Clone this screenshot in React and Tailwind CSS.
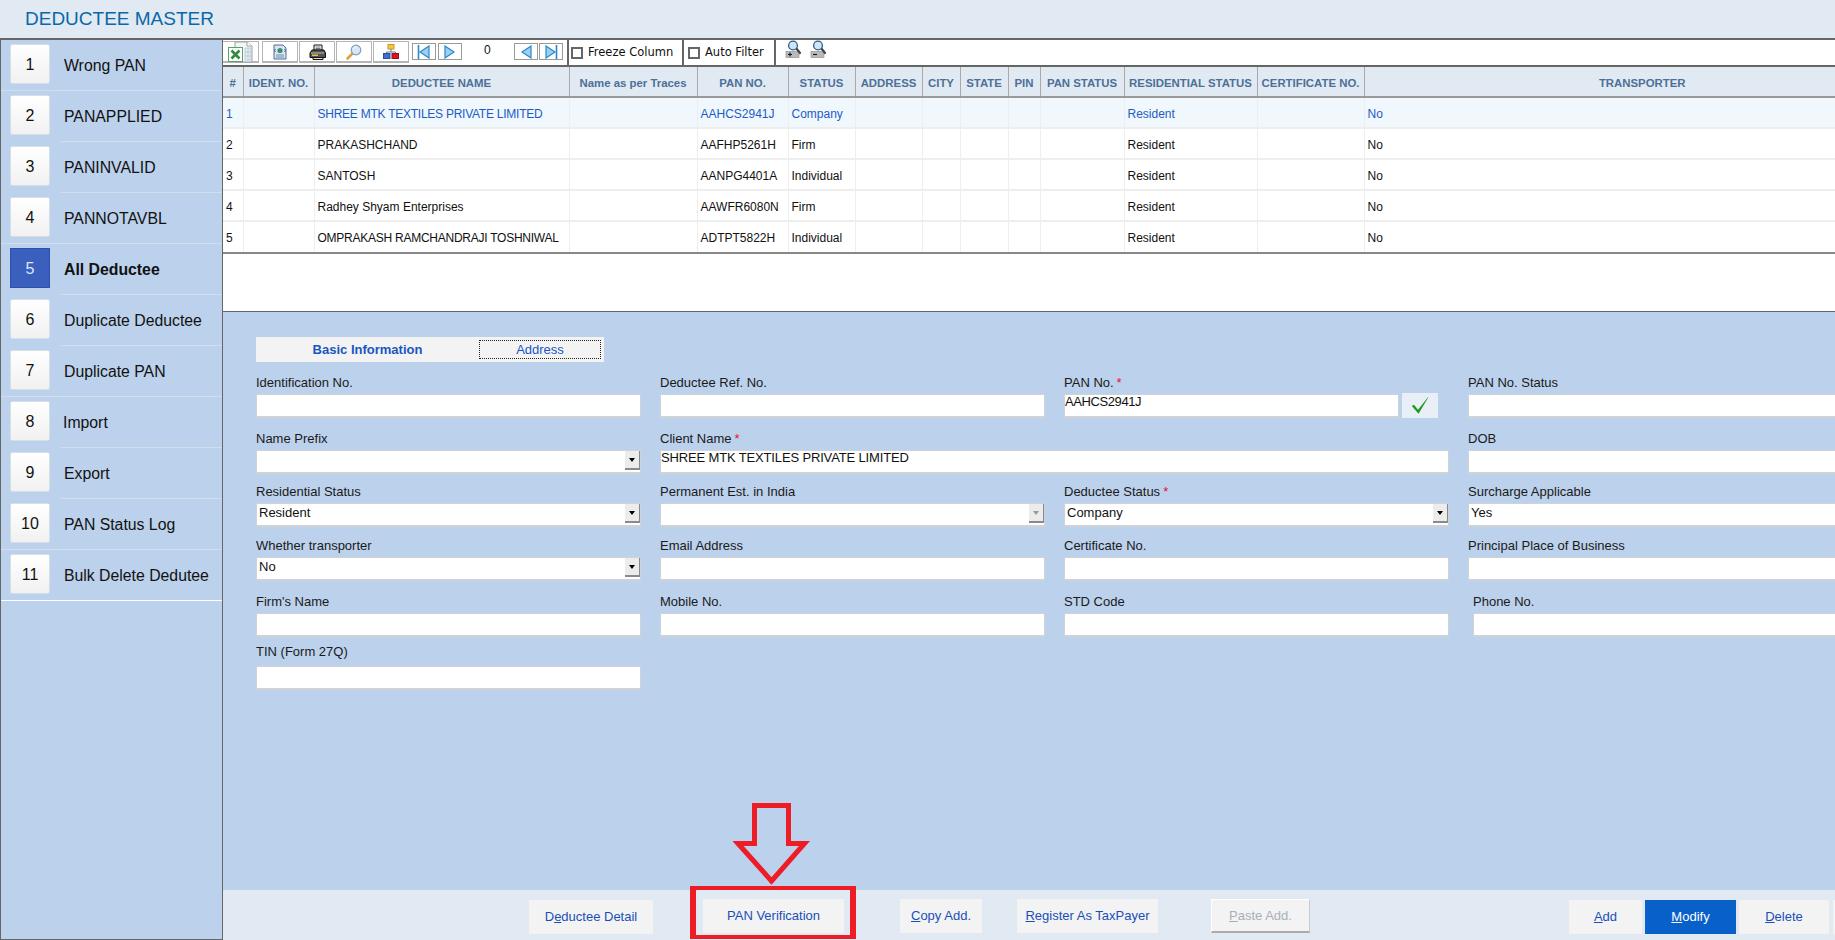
import React from "react";

const menu = [
  { n: 1, label: "Wrong PAN", full: true },
  { n: 2, label: "PANAPPLIED" },
  { n: 3, label: "PANINVALID" },
  { n: 4, label: "PANNOTAVBL", full: true },
  { n: 5, label: "All Deductee", active: true },
  { n: 6, label: "Duplicate Deductee" },
  { n: 7, label: "Duplicate PAN", full: true },
  { n: 8, label: "Import" },
  { n: 9, label: "Export" },
  { n: 10, label: "PAN Status Log", full: true },
  { n: 11, label: "Bulk Delete Dedutee", last: true },
];

const columns = [
  { title: "#", w: "w-[20px]" },
  { title: "IDENT. NO.", w: "w-[71px]" },
  { title: "DEDUCTEE NAME", w: "w-[255px]" },
  { title: "Name as per Traces", w: "w-[128px]" },
  { title: "PAN NO.", w: "w-[91px]" },
  { title: "STATUS", w: "w-[67px]" },
  { title: "ADDRESS", w: "w-[67px]" },
  { title: "CITY", w: "w-[38px]" },
  { title: "STATE", w: "w-[48px]" },
  { title: "PIN", w: "w-[32px]" },
  { title: "PAN STATUS", w: "w-[84px]" },
  { title: "RESIDENTIAL STATUS", w: "w-[133px]" },
  { title: "CERTIFICATE NO.", w: "w-[107px]" },
  { title: "TRANSPORTER", w: "" },
];

const rows = [
  ["1", "", "SHREE MTK TEXTILES PRIVATE LIMITED", "", "AAHCS2941J", "Company", "", "", "", "", "", "Resident", "", "No"],
  ["2", "", "PRAKASHCHAND", "", "AAFHP5261H", "Firm", "", "", "", "", "", "Resident", "", "No"],
  ["3", "", "SANTOSH", "", "AANPG4401A", "Individual", "", "", "", "", "", "Resident", "", "No"],
  ["4", "", "Radhey Shyam Enterprises", "", "AAWFR6080N", "Firm", "", "", "", "", "", "Resident", "", "No"],
  ["5", "", "OMPRAKASH RAMCHANDRAJI TOSHNIWAL", "", "ADTPT5822H", "Individual", "", "", "", "", "", "Resident", "", "No"],
];

function ExcelIcon() {
  return (
    <svg width="28" height="22" viewBox="0 0 28 22">
      <path d="M9 1h12l5 4v16H9z" fill="#f4f6f8" stroke="#9aa3ad" />
      <path d="M21 1v4h5" fill="#fff" stroke="#9aa3ad" />
      <path d="M19 7h6v12h-6zM19 11h6M19 15h6M22 7v12" fill="#e6edf4" stroke="#b4c4d4" strokeWidth="0.8" />
      <rect x="2.5" y="6.5" width="14" height="14" fill="#fff" stroke="#5f9f62" />
      <path d="M5.5 9.5l8 8M13.5 9.5l-8 8" stroke="#2c8a3a" strokeWidth="2.6" />
    </svg>
  );
}

function DocIcon() {
  return (
    <svg width="16" height="16" viewBox="0 0 16 16">
      <path d="M2 1h9l3 3v11H2z" fill="#dbe6f2" stroke="#4d6f96" />
      <path d="M4 11h8M4 13h8" stroke="#6d8db0" />
      <circle cx="8" cy="6.5" r="2.6" fill="#3f8f6f" />
      <path d="M3.5 5l-1 1.5 1 1.5M12.5 5l1 1.5-1 1.5" stroke="#2d5d9a" fill="none" />
    </svg>
  );
}

function PrinterIcon() {
  return (
    <svg width="17" height="16" viewBox="0 0 17 16">
      <path d="M5 1h8v5H5z" fill="#fff" stroke="#111" />
      <path d="M6.5 3h5M6.5 4.5h5" stroke="#777" />
      <path d="M3 6h12l1.5 3v4.5H1V9z" fill="#555" stroke="#111" />
      <path d="M2 9h13" stroke="#bbb" />
      <rect x="3" y="10.5" width="6" height="1.5" fill="#e6c531" />
      <path d="M4 13.5h10v2H4z" fill="#ddd" stroke="#111" />
    </svg>
  );
}

function SearchIcon() {
  return (
    <svg width="16" height="16" viewBox="0 0 16 16">
      <path d="M1.5 14.5l5-5" stroke="#e0a23c" strokeWidth="2.6" strokeLinecap="round" />
      <circle cx="10" cy="6" r="4.8" fill="#d6e8f7" stroke="#7f9fb8" strokeWidth="1.2" />
      <path d="M7.5 5c.5-1.4 1.6-2 3-2" stroke="#fff" fill="none" />
    </svg>
  );
}

function TreeIcon() {
  return (
    <svg width="16" height="15" viewBox="0 0 16 15">
      <rect x="5" y="0.5" width="6" height="4.5" fill="#f5c542" stroke="#c79a1e" />
      <path d="M8 5v3M3.5 10V8h9v2" stroke="#5a7ea8" fill="none" />
      <rect x="0.5" y="9.5" width="6.5" height="5" fill="#3f6fd0" stroke="#2a4f9f" />
      <rect x="9" y="9.5" width="6.5" height="5" fill="#d8141c" stroke="#a00f15" />
    </svg>
  );
}

// nav arrows: dir -1 points left, bar draws the end stop
function NavIcon({ dir, bar }) {
  return (
    <svg width="14" height="14" viewBox="0 0 14 14">
      {dir < 0 ? (
        <path d="M12 1v12L3 7z" fill="#9bd0f0" stroke="#2a88c8" strokeWidth="1.2" />
      ) : (
        <path d="M2 1v12l9-6z" fill="#9bd0f0" stroke="#2a88c8" strokeWidth="1.2" />
      )}
      {bar && (
        <path d={dir < 0 ? "M1.5 0v14" : "M12.5 0v14"} stroke="#2a88c8" strokeWidth="1.6" />
      )}
    </svg>
  );
}

function ZoomIcon({ plus }) {
  return (
    <svg width="17" height="18" viewBox="0 0 17 18">
      <rect x="1" y="11.5" width="13" height="6" fill="#b9b9b9" stroke="#888" strokeWidth="0.6" />
      <path d={plus ? "M3 14.5h4M5 12.5v4" : "M3 14.5h4"} stroke="#111" strokeWidth="1.1" />
      <path d="M11 8l4 5" stroke="#444" strokeWidth="2.2" strokeLinecap="round" />
      <circle cx="8" cy="5.5" r="4.4" fill="#cfe6f8" stroke="#2d5f8f" strokeWidth="1.3" />
    </svg>
  );
}

function ToolButton({ children, className = "" }) {
  return (
    <div className={"flex h-[22px] items-center justify-center border border-b-2 border-[#b5b5b5] bg-white " + className}>
      {children}
    </div>
  );
}

function NavButton({ children, className = "" }) {
  return (
    <div className={"flex h-[17px] w-[24px] items-center justify-center border border-[#9a9a9a] bg-white " + className}>
      {children}
    </div>
  );
}

function Check({ label, className = "" }) {
  return (
    <div className={"flex items-center font-['DejaVu_Sans'] text-[11.5px] text-[#111] " + className}>
      <span className="mr-[5px] h-[12px] w-[12px] border-2 border-[#666]"></span>
      {label}
    </div>
  );
}

function Toolbar() {
  return (
    <div className="flex h-[27px] shrink-0 items-start border-b-2 border-[#666] bg-white">
      <ToolButton className="mt-[1px] w-[36px] justify-start border-l-0">
        <span className="ml-[3px]"><ExcelIcon /></span>
      </ToolButton>
      <ToolButton className="ml-[3px] mt-[1px] w-[36px]"><DocIcon /></ToolButton>
      <ToolButton className="ml-[1px] mt-[1px] w-[36px]"><PrinterIcon /></ToolButton>
      <ToolButton className="ml-[1px] mt-[1px] w-[36px]"><SearchIcon /></ToolButton>
      <ToolButton className="ml-[1px] mt-[1px] w-[36px]"><TreeIcon /></ToolButton>
      <div className="ml-[3px] mt-[3px] flex w-[155px] items-start">
        <NavButton><NavIcon dir={-1} bar /></NavButton>
        <NavButton className="ml-[2px]"><NavIcon dir={1} /></NavButton>
        <span className="ml-[22px] w-[10px] text-[12px] leading-[14px] text-[#111]">0</span>
        <NavButton className="ml-[20px]"><NavIcon dir={-1} /></NavButton>
        <NavButton className="ml-[1px]"><NavIcon dir={1} bar /></NavButton>
      </div>
      <div className="h-full w-[2px] bg-[#666]"></div>
      <Check label="Freeze Column" className="ml-[2px] h-full w-[111px]" />
      <div className="h-full w-[2px] bg-[#666]"></div>
      <Check label="Auto Filter" className="ml-[4px] h-full w-[86px]" />
      <div className="h-full w-[2px] bg-[#666]"></div>
      <div className="ml-[9px]"><ZoomIcon plus /></div>
      <div className="ml-[8px]"><ZoomIcon /></div>
    </div>
  );
}

function GridTable() {
  return (
    <div className="h-[245px] shrink-0 overflow-hidden border-b border-[#666] bg-white">
      {/* the grid runs wider than the window, TRANSPORTER is cut off on the right */}
      <table className="w-[1697px] table-fixed border-collapse border-b-2 border-[#888]">
        <colgroup>
          {columns.map((c) => (
            <col key={c.title} className={c.w} />
          ))}
        </colgroup>
        <thead>
          <tr className="h-[30px] border-b-2 border-[#999] bg-[#e1eaf3]">
            {columns.map((c) => (
              <th key={c.title} className="overflow-hidden whitespace-nowrap border-r border-[#a9a9a9] p-0 pt-[4px] text-center text-[11.4px] font-bold text-[#4c7097] last:border-r-0">
                {c.title}
              </th>
            ))}
          </tr>
        </thead>
        <tbody>
          {rows.map((r, i) => (
            <tr key={i} className={i === 0 ? "h-[31px] border-b-2 border-[#eee] bg-[#f0f7fd] text-[#1c5cc4]" : "h-[31px] border-b-2 border-[#eee] text-[#111] last:h-[32px] last:border-b-0"}>
              {r.map((v, j) => (
                <td key={j} className={(v.length > 30 ? "tracking-[-0.25px] " : "") + "overflow-hidden whitespace-nowrap border-r border-[#eee] pb-0 pl-[3px] pr-0 pt-[2px] text-[12px] last:border-r-0"}>
                  {v}
                </td>
              ))}
            </tr>
          ))}
        </tbody>
      </table>
    </div>
  );
}

function Field({ label, req, value = "", select, off, className = "", labelGap = "mb-[4px]", inputPad = "pb-[8px]" }) {
  return (
    <div className={className}>
      <div className={labelGap + " h-[14px] text-[13px] leading-[14px] text-[#1a1a1a]"}>
        {label}
        {req && <span className="ml-[3px] text-[#e5132a]">*</span>}
      </div>
      <div className="relative">
        <input
          readOnly
          value={value}
          className={"block h-[24px] w-full border border-b-2 border-[#cfd3d8] bg-white text-[13px] text-[#111] outline-none " + (select ? "pb-[4px] pl-[2px]" : inputPad)}
        />
        {select && (
          <div className="absolute right-[1px] top-[1px] flex h-[19px] w-[15px] items-center justify-center border-b-2 border-r border-[#8a8a8a] bg-[#ececec]">
            <span className={off ? "h-0 w-0 border-x-[3.5px] border-t-[4px] border-x-transparent border-t-[#999]" : "h-0 w-0 border-x-[3.5px] border-t-[4px] border-x-transparent border-t-black"}></span>
          </div>
        )}
      </div>
    </div>
  );
}

const gridRow = "grid w-[1620px] grid-cols-[385px_385px_385px_1fr] gap-x-[19px]";

function FormArea() {
  return (
    <div className="min-h-0 flex-1 overflow-hidden bg-[#bcd1ec] pl-[33px] pt-[25px]">
      <div className="flex h-[25px] w-[348px] bg-[#f3f3f3]">
        <div className="w-[223px] text-center text-[13px] font-bold leading-[25px] text-[#1a56c0]">Basic Information</div>
        <div className="mt-[3px] h-[19px] w-[122px] border border-dotted border-[#222] text-center text-[13px] leading-[17px] text-[#1a56c0]">Address</div>
      </div>

      <div className={gridRow + " mt-[14px]"}>
        <Field label="Identification No." />
        <Field label="Deductee Ref. No." />
        <div>
          <Field label="PAN No." req value="AAHCS2941J" className="w-[335px]" inputPad="pb-[8px] tracking-[-0.4px]" />
          <div className="relative">
            <div className="absolute bottom-0 left-[338px] flex h-[25px] w-[36px] items-center justify-center bg-[#e9eff7]">
              <svg width="18" height="17" viewBox="0 0 18 17">
                <path d="M1 9l2-1 4 5L17 .5 7.5 16.5z" fill="#1b9a1b" stroke="#127f12" strokeWidth="0.3" />
              </svg>
            </div>
          </div>
        </div>
        <Field label="PAN No. Status" />
      </div>

      <div className={gridRow + " mt-[14px]"}>
        <Field label="Name Prefix" select />
        <Field label="Client Name" req value="SHREE MTK TEXTILES PRIVATE LIMITED" className="col-span-2" inputPad="pb-[8px] tracking-[-0.15px]" />
        <Field label="DOB" />
      </div>

      <div className={gridRow + " mt-[11px]"}>
        <Field label="Residential Status" value="Resident" select />
        <Field label="Permanent Est. in India" select off />
        <Field label="Deductee Status" req value="Company" select />
        <Field label="Surcharge Applicable" value="Yes" inputPad="pb-[4px] pl-[2px]" />
      </div>

      <div className={gridRow + " mt-[12px]"}>
        <Field label="Whether transporter" value="No" select />
        <Field label="Email Address" />
        <Field label="Certificate No." />
        <Field label="Principal Place of Business" />
      </div>

      <div className={gridRow + " mt-[14px]"}>
        <Field label="Firm's Name" />
        <Field label="Mobile No." />
        <Field label="STD Code" />
        <Field label="Phone No." className="ml-[5px]" />
      </div>

      <div className={gridRow + " mt-[8px]"}>
        <Field label="TIN (Form 27Q)" labelGap="mb-[7px]" />
      </div>
    </div>
  );
}

function ActionButton({ children, className = "" }) {
  return (
    <div className={"flex h-[34px] items-center justify-center bg-[#f3f3f3] text-[13px] text-[#1a4fb8] " + className}>
      {children}
    </div>
  );
}

function BottomBar() {
  return (
    <div className="relative flex h-[50px] shrink-0 items-start bg-[#e1eaf3] pl-[306px] pt-[10px]">
      <ActionButton className="w-[124px]">D<u>e</u>ductee Detail</ActionButton>
      <ActionButton className="-mt-[1px] ml-[50px] w-[141px]">PAN Verification</ActionButton>
      <ActionButton className="-mt-[1px] ml-[56px] w-[82px]"><u>C</u>opy Add.</ActionButton>
      <ActionButton className="-mt-[1px] ml-[35px] w-[141px]"><u>R</u>egister As TaxPayer</ActionButton>
      <ActionButton className="-mt-[1px] ml-[53px] w-[99px] border-b-2 border-l border-r border-t border-b-[#aaa] border-l-white border-r-[#ccc] border-t-white !text-[#aab0b8]"><u>P</u>aste Add.</ActionButton>
      <ActionButton className="ml-[259px] w-[73px]"><u>A</u>dd</ActionButton>
      <ActionButton className="ml-[3px] w-[91px] !bg-[#0860c9] !text-white"><u>M</u>odify</ActionButton>
      <ActionButton className="ml-[3px] w-[90px]"><u>D</u>elete</ActionButton>
      <ActionButton className="ml-[4px] w-[2px]"></ActionButton>

      {/* red annotation drawn on top of the screen */}
      <div className="absolute left-[467px] top-[-4px] h-[53px] w-[166px] border-x-[6px] border-y-[4px] border-[#ee1c25]"></div>
      <svg className="absolute left-[510px] top-[-90px]" width="80" height="90" viewBox="733 800 80 90">
        <path d="M754.5 805.5h34v38h16l-32.5 37-0.5 0.5L738 843.5h16.5z" fill="none" stroke="#ee1c25" strokeWidth="5" strokeLinejoin="miter" />
      </svg>
    </div>
  );
}

function Sidebar() {
  return (
    <aside className="w-[223px] shrink-0 border-x border-b border-[#666] bg-[#bcd1ec]">
      {menu.map((m) => (
        <div key={m.n}>
          <div className="flex h-[50px] items-start pl-[9px] pt-[4px]">
            <div className={m.active ? "flex h-[40px] w-[40px] items-center justify-center border border-[#2f50a8] bg-[#3a5fbd] pt-[2px] text-[16px] text-[#dfe8f8]" : "flex h-[40px] w-[40px] items-center justify-center rounded-[2px] border border-[#d6deea] bg-gradient-to-b from-white to-[#f1f1f1] pt-[2px] text-[16px] text-[#111]"}>
              {m.n}
            </div>
            <div className={(m.n === 8 ? "ml-[13px] " : "ml-[14px] ") + (m.active ? "font-bold " : "") + "whitespace-nowrap pt-[2px] text-[15.8px] leading-[40px] text-[#111]"}>
              {m.label}
            </div>
          </div>
          {m.last ? (
            <div className="h-[1px] bg-white"></div>
          ) : (
            <div className={(m.full ? "" : "ml-[60px] ") + "h-[1px] bg-[#d3deec]"}></div>
          )}
        </div>
      ))}
    </aside>
  );
}

export default function App() {
  return (
    <div className="flex h-[940px] w-[1835px] flex-col overflow-hidden bg-[#e1eaf3] font-['Liberation_Sans',Arial,sans-serif]">
      <header className="flex h-[38px] shrink-0 items-center pb-[2px] pl-[25px] text-[19px] leading-none text-[#0a68a8]">
        DEDUCTEE MASTER
      </header>
      <div className="flex min-h-0 flex-1 border-t-2 border-[#666]">
        <Sidebar />
        <main className="flex min-w-0 flex-1 flex-col">
          <Toolbar />
          <GridTable />
          <FormArea />
          <BottomBar />
        </main>
      </div>
    </div>
  );
}
